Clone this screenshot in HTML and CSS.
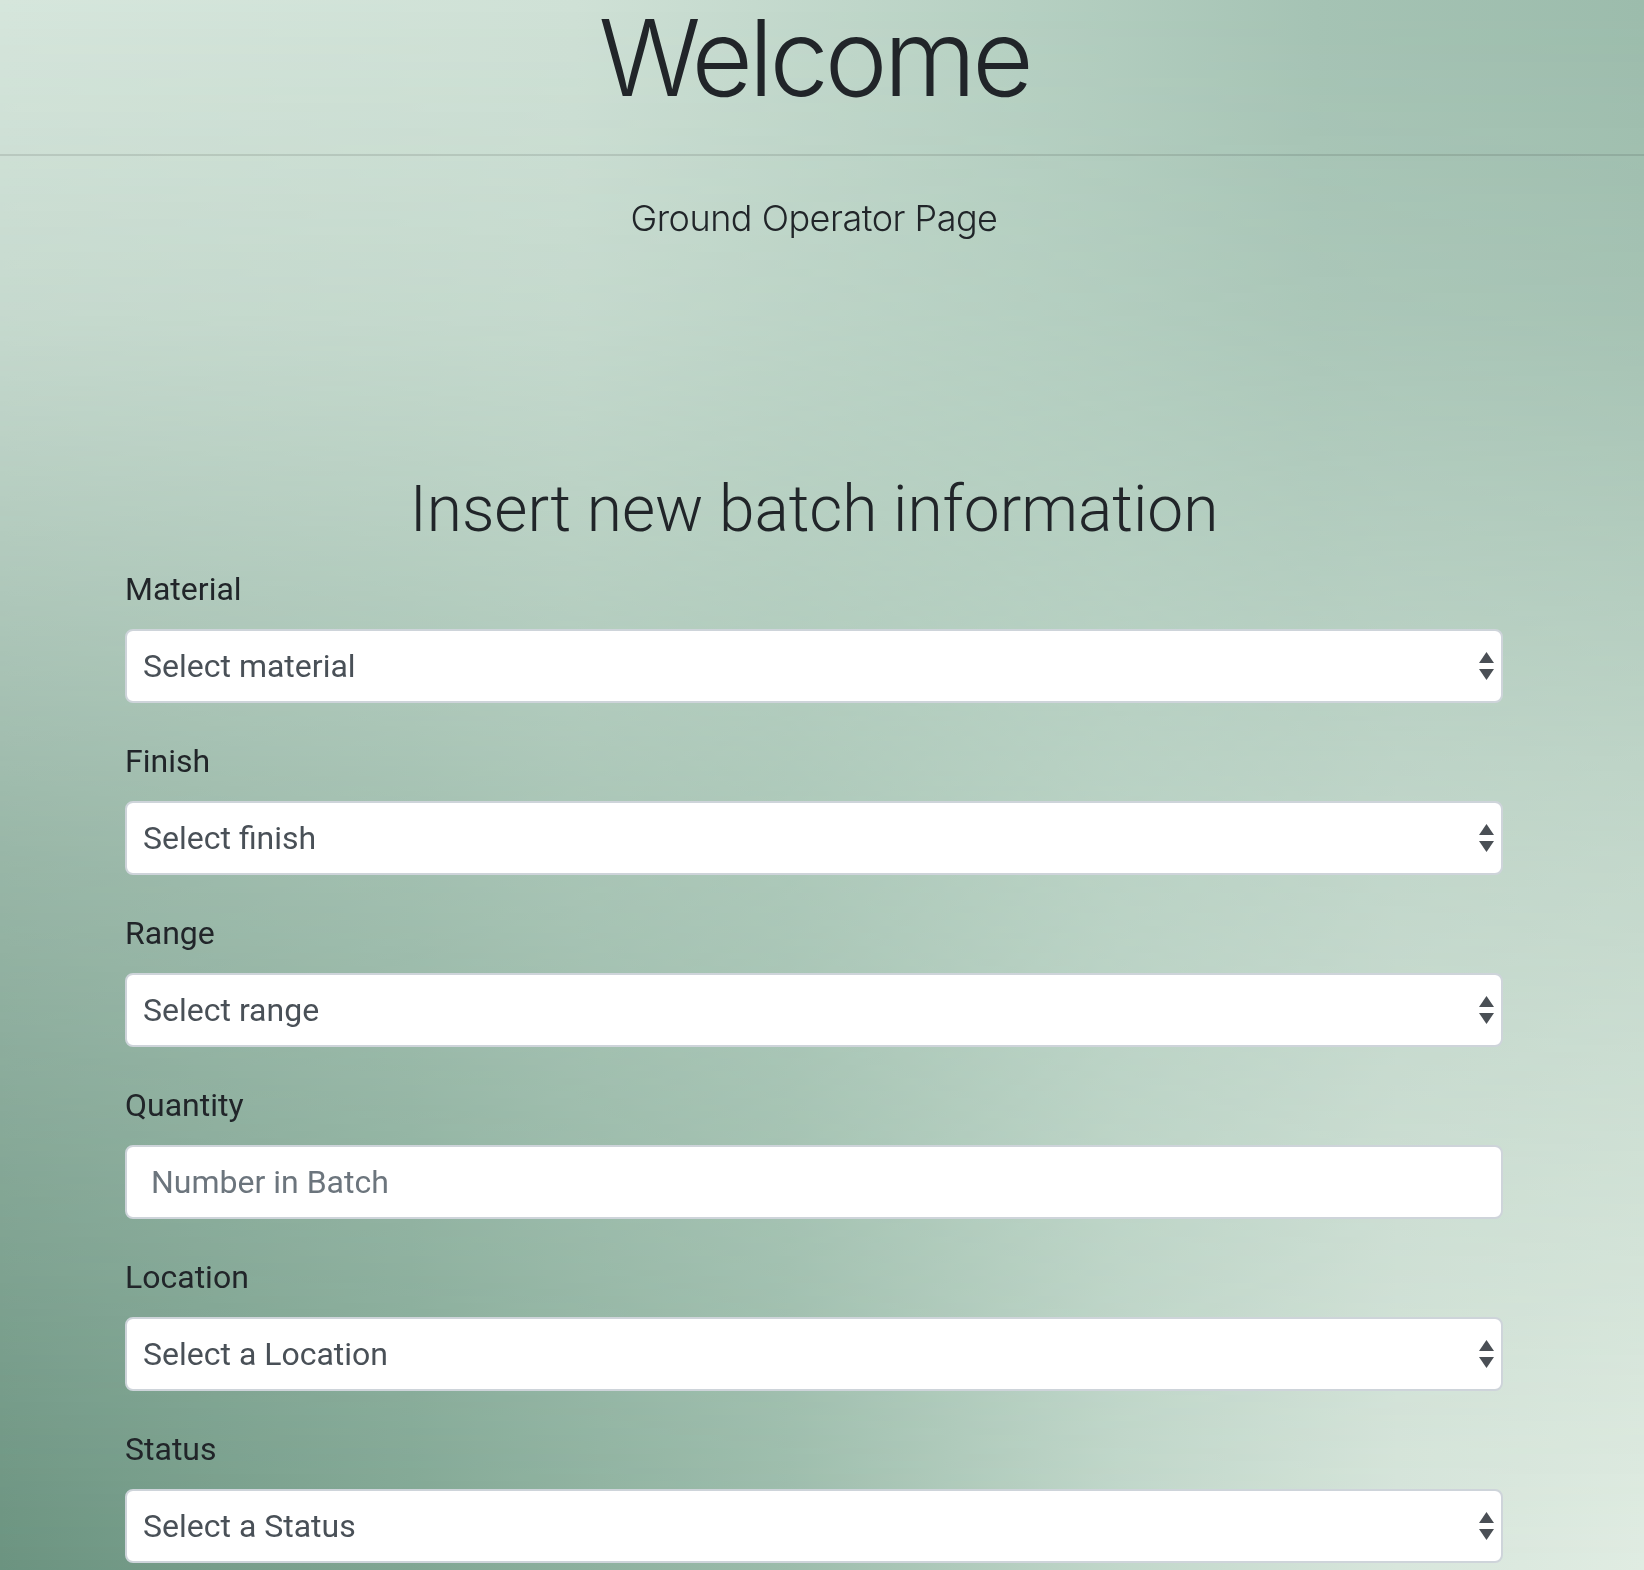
FILE: index.html
```html
<!DOCTYPE html>
<html lang="en">
<head>
<meta charset="utf-8">
<title>Ground Operator</title>
<link rel="stylesheet" href="styles.css">
</head>
<body>
<div class="page">
  <header class="hero">
    <h1 class="welcome">Welcome</h1>
  </header>
  <hr class="rule">
  <p class="lead">Ground Operator Page</p>

  <main class="container">
    <h2 class="form-title">Insert new batch information</h2>
    <form class="batch-form">
      <div class="form-group">
        <label class="form-label" for="material">Material</label>
        <div class="select-wrap">
          <select class="form-select" id="material"><option>Select material</option></select>
          <svg class="select-arrows" width="15" height="28" viewBox="0 0 15 28"><polygon points="7.5,0 15,11 0,11"/><polygon points="0,17 15,17 7.5,28"/></svg>
        </div>
      </div>
      <div class="form-group">
        <label class="form-label" for="finish">Finish</label>
        <div class="select-wrap">
          <select class="form-select" id="finish"><option>Select finish</option></select>
          <svg class="select-arrows" width="15" height="28" viewBox="0 0 15 28"><polygon points="7.5,0 15,11 0,11"/><polygon points="0,17 15,17 7.5,28"/></svg>
        </div>
      </div>
      <div class="form-group">
        <label class="form-label" for="range">Range</label>
        <div class="select-wrap">
          <select class="form-select" id="range"><option>Select range</option></select>
          <svg class="select-arrows" width="15" height="28" viewBox="0 0 15 28"><polygon points="7.5,0 15,11 0,11"/><polygon points="0,17 15,17 7.5,28"/></svg>
        </div>
      </div>
      <div class="form-group">
        <label class="form-label" for="quantity">Quantity</label>
        <input class="form-input" id="quantity" type="number" placeholder="Number in Batch">
      </div>
      <div class="form-group">
        <label class="form-label" for="location">Location</label>
        <div class="select-wrap">
          <select class="form-select" id="location"><option>Select a Location</option></select>
          <svg class="select-arrows" width="15" height="28" viewBox="0 0 15 28"><polygon points="7.5,0 15,11 0,11"/><polygon points="0,17 15,17 7.5,28"/></svg>
        </div>
      </div>
      <div class="form-group">
        <label class="form-label" for="status">Status</label>
        <div class="select-wrap">
          <select class="form-select" id="status"><option>Select a Status</option></select>
          <svg class="select-arrows" width="15" height="28" viewBox="0 0 15 28"><polygon points="7.5,0 15,11 0,11"/><polygon points="0,17 15,17 7.5,28"/></svg>
        </div>
      </div>
    </form>
  </main>
</div>
</body>
</html>
```

FILE: styles.css
```css
html, body {
  margin: 0;
  padding: 0;
  height: 100%;
  overflow: hidden;
}

html {
  background: linear-gradient(to right, #d6e6dc 0%, #cfe1d6 35%, #b6d0c2 62%, #a5c3b4 80%, #9cbcac 100%);
}

body {
  position: relative;
  padding-right: 16px;
  box-sizing: border-box;
  font-family: Roboto, "Liberation Sans", sans-serif;
  color: #212529;
}

body::before {
  content: "";
  position: fixed;
  inset: 0;
  z-index: -1;
  background: linear-gradient(to right, #6b9380 0%, #80a693 25%, #9cbcab 48%, #c1d7ca 68%, #d8e6dc 85%, #e0ece2 100%);
  -webkit-mask-image: linear-gradient(to bottom, rgba(0,0,0,0) 0%, rgba(0,0,0,0.15) 20%, rgba(0,0,0,0.58) 55%, rgba(0,0,0,1) 100%);
  mask-image: linear-gradient(to bottom, rgba(0,0,0,0) 0%, rgba(0,0,0,0.15) 20%, rgba(0,0,0,0.58) 55%, rgba(0,0,0,1) 100%);
}

.page {
  width: 100%;
}

.hero {
  height: 154px;
  text-align: center;
}

.welcome {
  margin: 0;
  font-family: Inter, Roboto, sans-serif;
  font-weight: 300;
  font-size: 106px;
  line-height: 115px;
  letter-spacing: -4px;
  color: #212529;
}

.rule {
  margin: 0 -16px 0 0;
  border: 0;
  height: 2px;
  background: rgba(0, 0, 0, 0.1);
}

.lead {
  margin: 34px 0 0;
  text-align: center;
  font-family: Inter, Roboto, sans-serif;
  font-weight: 300;
  font-size: 36px;
  line-height: 56px;
  letter-spacing: -0.5px;
  color: #212529;
}

.container {
  width: 1378px;
  margin: 226px auto 0;
}

.form-title {
  margin: 0 0 16px;
  text-align: center;
  font-family: Roboto, sans-serif;
  font-weight: 300;
  font-size: 64px;
  line-height: 76.8px;
  color: #212529;
}

.batch-form {
  display: flex;
  flex-direction: column;
}

.form-group {
  display: flex;
  flex-direction: column;
  margin-bottom: 34px;
}

.form-label {
  font-size: 32px;
  line-height: 48px;
  margin-bottom: 16px;
  color: #212529;
}

.select-wrap {
  position: relative;
}

.form-select,
.form-input {
  display: block;
  box-sizing: border-box;
  width: 100%;
  height: 74px;
  margin: 0;
  border: 2px solid #ced4da;
  border-radius: 8px;
  background: #ffffff;
  font-family: Roboto, sans-serif;
  font-size: 32px;
  color: #495057;
  outline: none;
}

.form-select {
  -webkit-appearance: none;
  appearance: none;
  padding: 0 50px 0 16px;
}

.form-input {
  padding: 0 24px;
  -moz-appearance: textfield;
}

.form-input::-webkit-outer-spin-button,
.form-input::-webkit-inner-spin-button {
  -webkit-appearance: none;
  margin: 0;
}

.form-input::placeholder {
  color: #6c757d;
  opacity: 1;
}

.select-arrows {
  position: absolute;
  right: 9px;
  top: 23px;
  fill: #4a4f55;
  pointer-events: none;
}
```
